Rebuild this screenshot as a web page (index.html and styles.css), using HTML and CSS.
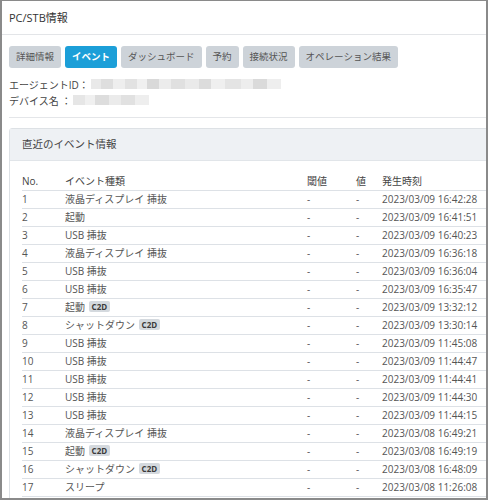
FILE: index.html
```html
<!DOCTYPE html>
<html lang="ja">
<head>
<meta charset="utf-8">
<link rel="stylesheet" href="styles.css">
</head>
<body>
<div class="frame">
  <div class="title">PC/STB情報</div>
  <div class="tabs">
    <span class="tab">詳細情報</span>
    <span class="tab active">イベント</span>
    <span class="tab">ダッシュボード</span>
    <span class="tab">予約</span>
    <span class="tab">接続状況</span>
    <span class="tab">オペレーション結果</span>
  </div>
  <div class="info">
    <div class="info-row"><span>エージェントID：</span><span class="mosaic m1"></span></div>
    <div class="info-row"><span>デバイス名 ：</span><span class="mosaic m2"></span></div>
  </div>
  <div class="divider"></div>
  <div class="panel">
    <div class="panel-head">直近のイベント情報</div>
    <div class="panel-body">
      <div class="row head"><span>No.</span><span>イベント種類</span><span>閾値</span><span>値</span><span>発生時刻</span></div>
      <div class="row"><span>1</span><span>液晶ディスプレイ 挿抜</span><span>-</span><span>-</span><span>2023/03/09 16:42:28</span></div>
      <div class="row"><span>2</span><span>起動</span><span>-</span><span>-</span><span>2023/03/09 16:41:51</span></div>
      <div class="row"><span>3</span><span>USB 挿抜</span><span>-</span><span>-</span><span>2023/03/09 16:40:23</span></div>
      <div class="row"><span>4</span><span>液晶ディスプレイ 挿抜</span><span>-</span><span>-</span><span>2023/03/09 16:36:18</span></div>
      <div class="row"><span>5</span><span>USB 挿抜</span><span>-</span><span>-</span><span>2023/03/09 16:36:04</span></div>
      <div class="row"><span>6</span><span>USB 挿抜</span><span>-</span><span>-</span><span>2023/03/09 16:35:47</span></div>
      <div class="row"><span>7</span><span>起動 <b class="badge">C2D</b></span><span>-</span><span>-</span><span>2023/03/09 13:32:12</span></div>
      <div class="row"><span>8</span><span>シャットダウン <b class="badge">C2D</b></span><span>-</span><span>-</span><span>2023/03/09 13:30:14</span></div>
      <div class="row"><span>9</span><span>USB 挿抜</span><span>-</span><span>-</span><span>2023/03/09 11:45:08</span></div>
      <div class="row"><span>10</span><span>USB 挿抜</span><span>-</span><span>-</span><span>2023/03/09 11:44:47</span></div>
      <div class="row"><span>11</span><span>USB 挿抜</span><span>-</span><span>-</span><span>2023/03/09 11:44:41</span></div>
      <div class="row"><span>12</span><span>USB 挿抜</span><span>-</span><span>-</span><span>2023/03/09 11:44:30</span></div>
      <div class="row"><span>13</span><span>USB 挿抜</span><span>-</span><span>-</span><span>2023/03/09 11:44:15</span></div>
      <div class="row"><span>14</span><span>液晶ディスプレイ 挿抜</span><span>-</span><span>-</span><span>2023/03/08 16:49:21</span></div>
      <div class="row"><span>15</span><span>起動 <b class="badge">C2D</b></span><span>-</span><span>-</span><span>2023/03/08 16:49:19</span></div>
      <div class="row"><span>16</span><span>シャットダウン <b class="badge">C2D</b></span><span>-</span><span>-</span><span>2023/03/08 16:48:09</span></div>
      <div class="row"><span>17</span><span>スリープ</span><span>-</span><span>-</span><span>2023/03/08 11:26:08</span></div>
      <div class="row"><span>18</span><span>液晶ディスプレイ 挿抜</span><span>-</span><span>-</span><span>2023/03/08 11:11:04</span></div>
    </div>
  </div>
</div>
</body>
</html>
```

FILE: styles.css
```css
html, body {
  margin: 0;
  padding: 0;
  background: #ffffff;
}
body {
  font-family: "Open Sans", "Noto Sans CJK JP", sans-serif;
  color: #444;
}
.frame {
  width: 488px;
  height: 500px;
  box-sizing: border-box;
  border: 2px solid #8a8a8a;
  border-top-width: 1px;
  overflow: hidden;
  background: #fff;
}
.title {
  height: 34px;
  box-sizing: border-box;
  border-bottom: 1px solid #e3e5e8;
  padding-left: 7px;
  font-size: 11px;
  line-height: 34px;
  color: #333;
}
.tabs {
  display: flex;
  gap: 4px;
  padding-left: 7px;
  margin-top: 11px;
}
.tab {
  height: 22px;
  line-height: 22px;
  padding: 0 7px;
  font-size: 9.5px;
  color: #555;
  background: #cdd3d9;
  border-radius: 3px;
  white-space: nowrap;
}
.tab.active {
  background: #1c9fd8;
  color: #fff;
  font-weight: bold;
}
.info {
  padding: 8px 0 0 7px;
  font-size: 10px;
  color: #444;
}
.info-row {
  display: flex;
  align-items: center;
  height: 16px;
}
.mosaic {
  display: inline-block;
  height: 10px;
  margin-left: 2px;
}
.m1 {
  width: 190px;
  background: linear-gradient(90deg, #e9e9e9 0 10px, #dedede 10px 22px, #eeeeee 22px 34px, #e2e2e2 34px 46px, #f0f0f0 46px 56px, #d9d9d9 56px 68px, #ececec 68px 80px, #e0e0e0 80px 94px, #eaeaea 94px 108px, #dcdcdc 108px 120px, #efefef 120px 134px, #e4e4e4 134px 150px, #ededed 150px 162px, #dadada 162px 176px, #eeeeee 176px 190px);
}
.m2 {
  width: 76px;
  background: linear-gradient(90deg, #e6e6e6 0 12px, #f0f0f0 12px 22px, #dddddd 22px 36px, #ebebeb 36px 48px, #e1e1e1 48px 62px, #eeeeee 62px 76px);
}
.divider {
  margin: 9px 0 0 7px;
  border-top: 1px solid #e4e6e9;
}
.panel {
  margin: 10px -20px 0 7px;
  border: 1px solid #dde1e5;
  border-radius: 3px;
}
.panel-head {
  height: 31px;
  line-height: 31px;
  padding-left: 12px;
  background: #eef1f4;
  border-bottom: 1px solid #e1e5e9;
  font-size: 10.5px;
  color: #444;
}
.panel-body {
  padding: 12px 0 0 12px;
}
.row {
  display: grid;
  grid-template-columns: 43px 242px 49px 26px 1fr;
  height: 17px;
  line-height: 17px;
  border-bottom: 1px solid #dde1e6;
  font-size: 10px;
  color: #555;
  white-space: nowrap;
}
.row.head {
  color: #444;
}
.badge {
  display: inline-block;
  background: #d4d9de;
  color: #3a3a3a;
  font-size: 8px;
  font-weight: bold;
  line-height: 11px;
  height: 11px;
  padding: 0 3px;
  margin-left: 1px;
  border-radius: 2px;
  vertical-align: 1px;
}
```
